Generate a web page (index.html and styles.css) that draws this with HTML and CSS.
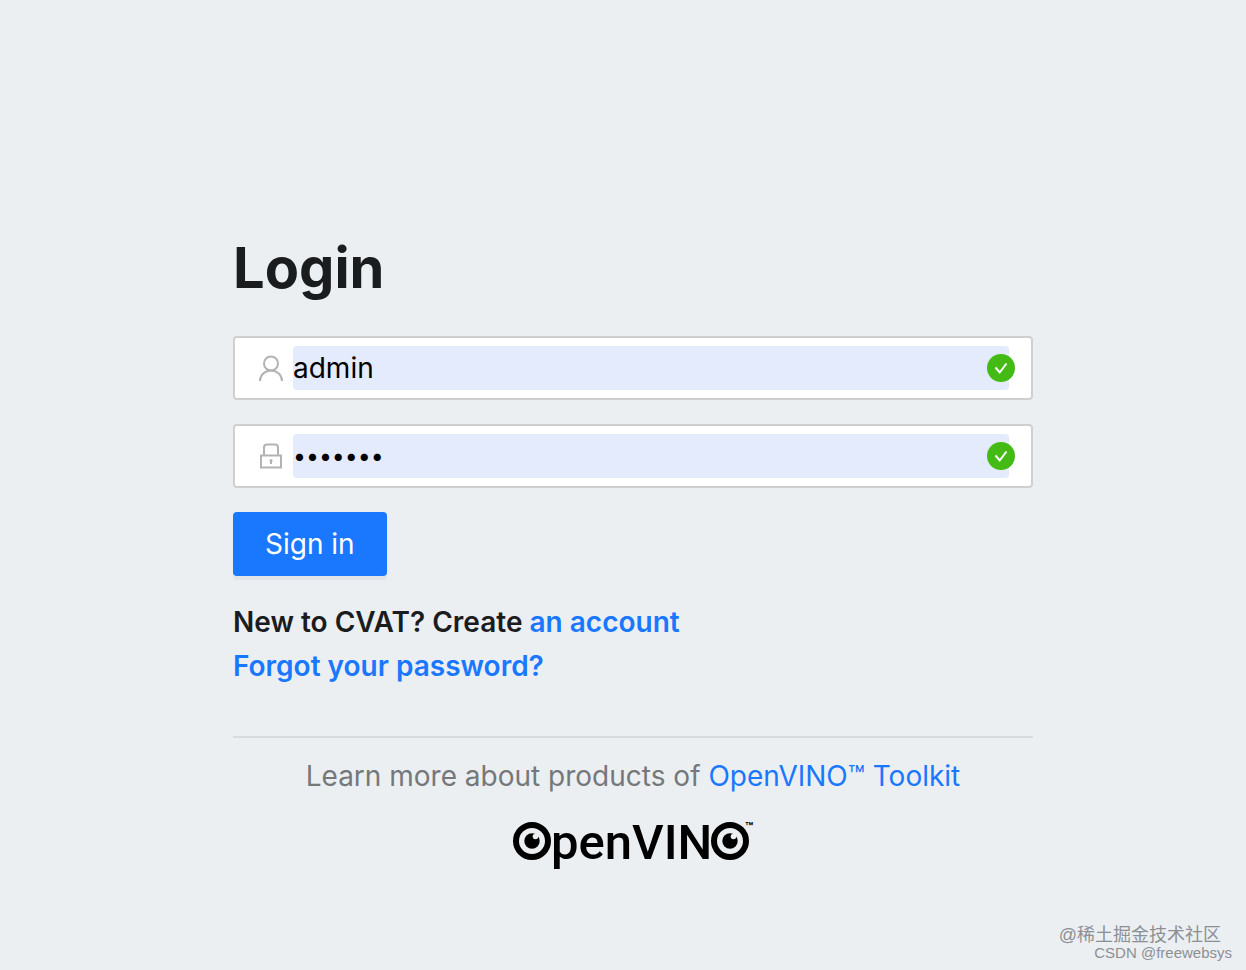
FILE: index.html
```
<!DOCTYPE html>
<html lang="en">
<head>
<meta charset="utf-8">
<meta name="viewport" content="width=device-width, initial-scale=1">
<title>Login</title>
<link rel="stylesheet" href="styles.css">
</head>
<body>
<main class="page">
  <section class="login">
    <h1 class="title">Login</h1>
    <form class="form">
      <div class="field">
        <svg class="field-icon" viewBox="0 0 28 28" aria-hidden="true"><circle cx="14" cy="9.500" r="7"/><path d="M3 27a11 10.500 0 0 1 22 0"/></svg>
        <input class="control" type="text" value="admin" aria-label="Username" autocomplete="username">
        <svg class="valid" viewBox="0 0 28 28" aria-hidden="true"><circle cx="14" cy="14" r="14"/><path d="M8.500 13.500 12.700 18.500 19.500 9.500"/></svg>
      </div>
      <div class="field">
        <svg class="field-icon" viewBox="0 0 28 28" aria-hidden="true"><path d="M4 13.500h20v12H4zM7 13.500V5.500q0-3 3-3h8q3 0 3 3v8M14 18v4"/><circle cx="14" cy="18.500" r=".6"/></svg>
        <input class="control secret" type="password" value="freeweb" aria-label="Password" autocomplete="current-password">
        <svg class="valid" viewBox="0 0 28 28" aria-hidden="true"><circle cx="14" cy="14" r="14"/><path d="M8.500 13.500 12.700 18.500 19.500 9.500"/></svg>
      </div>
      <button class="submit" type="submit">Sign in</button>
    </form>
    <p class="help">New to CVAT? Create <a href="#register">an account</a></p>
    <p class="help"><a href="#reset">Forgot your password?</a></p>
    <footer class="footer">
      <p class="learn">Learn more about products of <a href="#openvino">OpenVINO™ Toolkit</a></p>
      <svg class="logo" viewBox="0 0 242 52" role="img" aria-label="OpenVINO">
        <circle class="ring" cx="20" cy="21" r="16"/><circle cx="20" cy="21" r="7.700"/><circle class="glint" cx="23.500" cy="16.500" r="2.800"/>
        <text class="word" x="39" y="39">penVIN</text>
        <circle class="ring" cx="218" cy="21" r="16"/><circle cx="218" cy="21" r="7.700"/><circle class="glint" cx="221.500" cy="16.500" r="2.800"/>
        <text class="mark" x="233" y="12">™</text>
      </svg>
    </footer>
  </section>
</main>
<div class="watermark">
  <span class="community">@稀土掘金技术社区</span>
  <span class="author">CSDN @freewebsys</span>
</div>
</body>
</html>
```
FILE: styles.css
```
* { box-sizing: border-box; }
body {
  margin: 0;
  background: #ebeff2;
  color: #1a1c1e;
  font: 28px/44px Inter, "Noto Sans CJK SC", sans-serif;
}
a { color: #1a77ff; text-decoration: none; }
.page {
  position: relative;
  display: flex;
  justify-content: center;
  min-height: 100vh;
  padding: 232px 0 80px 20px;
}
.login { width: 100%; max-width: 800px; }
.title { margin: 0 0 32px; font-size: 56px; line-height: 72px; font-weight: 700; }
.form { display: grid; gap: 24px; justify-items: start; margin-bottom: 24px; }
.field {
  position: relative;
  display: flex;
  align-items: center;
  width: 100%;
  height: 64px;
  padding: 0 22px;
  border: 2px solid #cdcfd0;
  border-radius: 4px;
  background: #fff;
}
.field-icon { flex: none; width: 28px; height: 28px; margin-right: 8px; fill: none; stroke: #b3b3b3; stroke-width: 2; }
.control {
  flex: 1;
  min-width: 0;
  height: 44px;
  padding: 0;
  border: 0;
  border-radius: 4px;
  outline: 0;
  background: #e4ebfd;
  color: #000;
  font: inherit;
}
.secret { font-size: 23px; }
.valid { position: absolute; right: 16px; width: 28px; height: 28px; fill: #43bb14; }
.valid path { fill: none; stroke: #fff; stroke-width: 2; }
.submit {
  height: 64px;
  padding: 0 32px;
  border: 0;
  border-radius: 4px;
  background: #1a77ff;
  box-shadow: 0 4px 0 #e1e4e8;
  color: #fff;
  font: inherit;
}
.help { margin: 0; font-weight: 600; }
.footer {
  display: flex;
  flex-direction: column;
  align-items: center;
  gap: 22px;
  margin-top: 48px;
  padding-top: 16px;
  border-top: 2px solid #d7dbde;
}
.learn { margin: 0; color: #75787a; }
.logo { width: 242px; height: 52px; overflow: visible; }
.ring { fill: none; stroke: #000; stroke-width: 6; }
.glint { fill: #ebeff2; }
.word { font: 500 49px Roboto, sans-serif; }
.mark { font: 700 13px Inter, sans-serif; }
.watermark {
  position: absolute;
  right: 14px;
  bottom: 8px;
  display: grid;
  justify-items: end;
  color: #8d9092;
  font: 15px/18px "Liberation Sans", "Noto Sans CJK SC", sans-serif;
}
.community { margin-right: 11px; font-size: 18px; }
```
